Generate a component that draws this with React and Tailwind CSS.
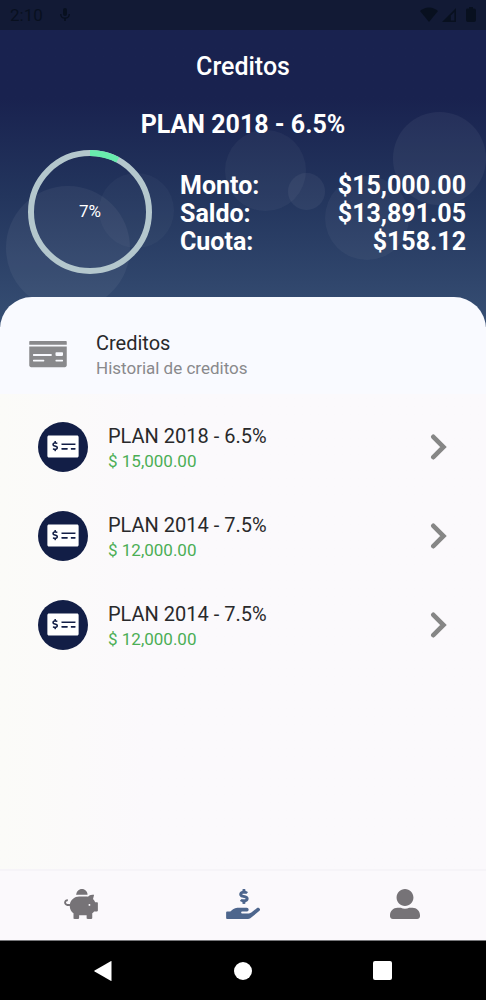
import React from 'react';
import {
    FaHandHoldingUsd,
    FaMoneyCheck,
    FaMoneyCheckAlt,
    FaPiggyBank,
    FaUserAlt
} from 'react-icons/fa';

const resumen = [
    { label: 'Monto:', value: '$15,000.00' },
    { label: 'Saldo:', value: '$13,891.05' },
    { label: 'Cuota:', value: '$158.12' }
];

const creditos = [
    { id: 1, plan: 'PLAN 2018 - 6.5%', monto: '$ 15,000.00' },
    { id: 2, plan: 'PLAN 2014 - 7.5%', monto: '$ 12,000.00' },
    { id: 3, plan: 'PLAN 2014 - 7.5%', monto: '$ 12,000.00' }
];

const StatusBar = () => (
    <div className="relative flex h-[30px] items-center justify-between bg-[#121a35] pl-[10px] pr-2 text-[#08101f]">
        <div className="flex items-center gap-4">
            <span className="text-[17px] leading-5">2:10</span>
            <svg viewBox="0 0 12 14" className="h-[14px] w-3" fill="currentColor" aria-hidden="true">
                <rect x="4" y="0" width="4" height="8" rx="2" />
                <path d="M1 6h1.4a3.6 3.6 0 0 0 7.2 0H11a5 5 0 0 1-4.2 4.8V13H5.2v-2.2A5 5 0 0 1 1 6Z" />
            </svg>
        </div>
        <div className="flex items-center gap-1">
            <svg viewBox="0 0 18 16" className="h-4 w-[18px]" fill="currentColor" aria-hidden="true">
                <path d="M0 4C5-.8 13-.8 18 4L9 15Z" />
            </svg>
            <svg viewBox="0 0 14 16" className="h-4 w-[14px]" fill="currentColor" aria-hidden="true">
                <path fillRule="evenodd" d="M14 1v14H0ZM12.4 5v8.4H8.8V8.6Z" />
            </svg>
            <svg viewBox="0 0 18 16" className="h-4 w-[18px]" fill="currentColor" aria-hidden="true">
                <path d="M7 1.500h2V0h4v1.500h1q2 0 2 2V13q0 2-2 2H8q-2 0-2-2V3.500q0-2 1-2Z" />
            </svg>
        </div>
    </div>
);

// Translucent bubbles behind the summary
const Bubbles = () => (
    <div className="absolute inset-0" aria-hidden="true">
        <span className="absolute left-[6px] top-[186px] size-[124px] rounded-full bg-white/5" />
        <span className="absolute left-[99px] top-[173px] size-[75px] rounded-full bg-white/3" />
        <span className="absolute left-[225px] top-[130px] size-[81px] rounded-full bg-white/4" />
        <span className="absolute left-[288px] top-[173px] size-[37px] rounded-full bg-white/5" />
        <span className="absolute right-[77px] top-[176px] size-[84px] rounded-full bg-white/4" />
        <span className="absolute right-0 top-[112px] size-[93px] rounded-full bg-white/5" />
    </div>
);

const ProgressRing = ({ percent }) => (
    <div className="relative size-[124px] shrink-0">
        <svg viewBox="0 0 124 124" className="size-full -rotate-90" fill="none" strokeWidth="6" aria-hidden="true">
            <circle cx="62" cy="62" r="59" stroke="#b4c7cd" />
            <circle
                cx="62"
                cy="62"
                r="59"
                stroke="#68edad"
                pathLength="100"
                strokeDasharray={`${percent} 100`}
            />
        </svg>
        <span className="absolute inset-0 flex items-center justify-center text-[17px] text-white">
            {Math.floor(percent)}%
        </span>
    </div>
);

const CreditRow = ({ plan, monto }) => (
    <li>
        <button type="button" className="flex h-[89px] w-full items-center pl-[38px] pr-[38px] text-left">
            <span className="flex size-[50px] shrink-0 items-center justify-center rounded-full bg-[#121e46] text-white">
                <FaMoneyCheckAlt className="h-[25px] w-8" />
            </span>
            <span className="ml-5 flex grow flex-col pt-[3px]">
                <span className="text-xl leading-[26px] text-[#29292b]">{plan}</span>
                <span className="text-[17px] leading-[25px] text-[#4bae55]">{monto}</span>
            </span>
            <svg viewBox="0 0 18 26" className="h-[26px] w-[18px]" fill="none" stroke="#868686" strokeWidth="4.600" strokeLinecap="round" aria-hidden="true">
                <path d="M3.300 2.800 13.500 13 3.300 23.200" />
            </svg>
        </button>
    </li>
);

const TabBar = () => (
    <nav className="grid h-[71px] grid-cols-3 border-t-2 border-[#f6f4f8] text-[#767377]">
        <button type="button" aria-label="Ahorros" className="flex items-center justify-center pb-1">
            <FaPiggyBank className="h-[30px] w-[34px]" />
        </button>
        <button type="button" aria-label="Creditos" aria-current="page" className="flex items-center justify-center pb-1 text-[#4d668d]">
            <FaHandHoldingUsd className="h-[30px] w-[34px]" />
        </button>
        <button type="button" aria-label="Perfil" className="flex items-center justify-center pb-1">
            <FaUserAlt className="size-[30px]" />
        </button>
    </nav>
);

const SystemNav = () => (
    <div className="flex h-[60px] items-center justify-center gap-[121px] border-t border-[#77777a] bg-black pr-[2px] text-white">
        <button type="button" aria-label="Atrás">
            <svg viewBox="0 0 20 20" className="size-5" fill="currentColor" aria-hidden="true">
                <path d="M18.500.6V19.400q0 .8-.8.4L1.600 10.600q-.8-.6 0-1.200L17.700.2q.8-.4.8.4Z" />
            </svg>
        </button>
        <button type="button" aria-label="Inicio" className="size-[18px] rounded-full bg-white" />
        <button type="button" aria-label="Recientes" className="size-[19px] rounded-xs bg-white" />
    </div>
);

export default function App() {
    return (
        <div className="flex min-h-screen flex-col bg-[#fbf9fc] font-[Roboto,sans-serif]">
            <header className="relative overflow-hidden bg-linear-to-b from-[#19224f] from-30% via-[#23355d] via-60% to-[#374f74] pb-[53px] text-white">
                <Bubbles />
                <StatusBar />
                <div className="relative">
                    <h1 className="pt-[22px] text-center text-[25px] font-medium leading-[30px]">Creditos</h1>
                    <h2 className="pt-7 text-center text-[25px] font-bold leading-[30px]">PLAN 2018 - 6.5%</h2>
                    <div className="flex items-center gap-7 pl-7 pr-5 pt-[10px]">
                        <ProgressRing percent={7.8} />
                        <dl className="grow pt-[3px] text-[25px] font-bold leading-7">
                            {resumen.map((item) => (
                                <div key={item.label} className="flex justify-between">
                                    <dt>{item.label}</dt>
                                    <dd>{item.value}</dd>
                                </div>
                            ))}
                        </dl>
                    </div>
                </div>
            </header>

            <main className="relative -mt-[30px] flex grow flex-col">
                <div className="flex h-[97px] items-center gap-7 rounded-t-[32px] bg-[#f9faff] pl-7 pt-4">
                    <FaMoneyCheck className="h-[30px] w-10 text-[#89898c]" />
                    <div className="pt-1">
                        <h3 className="text-xl leading-[26px] text-[#29292b]">Creditos</h3>
                        <p className="text-[17px] leading-[25px] text-[#89898c]">Historial de creditos</p>
                    </div>
                </div>
                <ul className="grow bg-linear-to-r from-[#fbfbf8] to-[#fbf9fc] to-30% pt-2">
                    {creditos.map((c) => (
                        <CreditRow key={c.id} plan={c.plan} monto={c.monto} />
                    ))}
                </ul>
            </main>

            <TabBar />
            <SystemNav />
        </div>
    );
}
